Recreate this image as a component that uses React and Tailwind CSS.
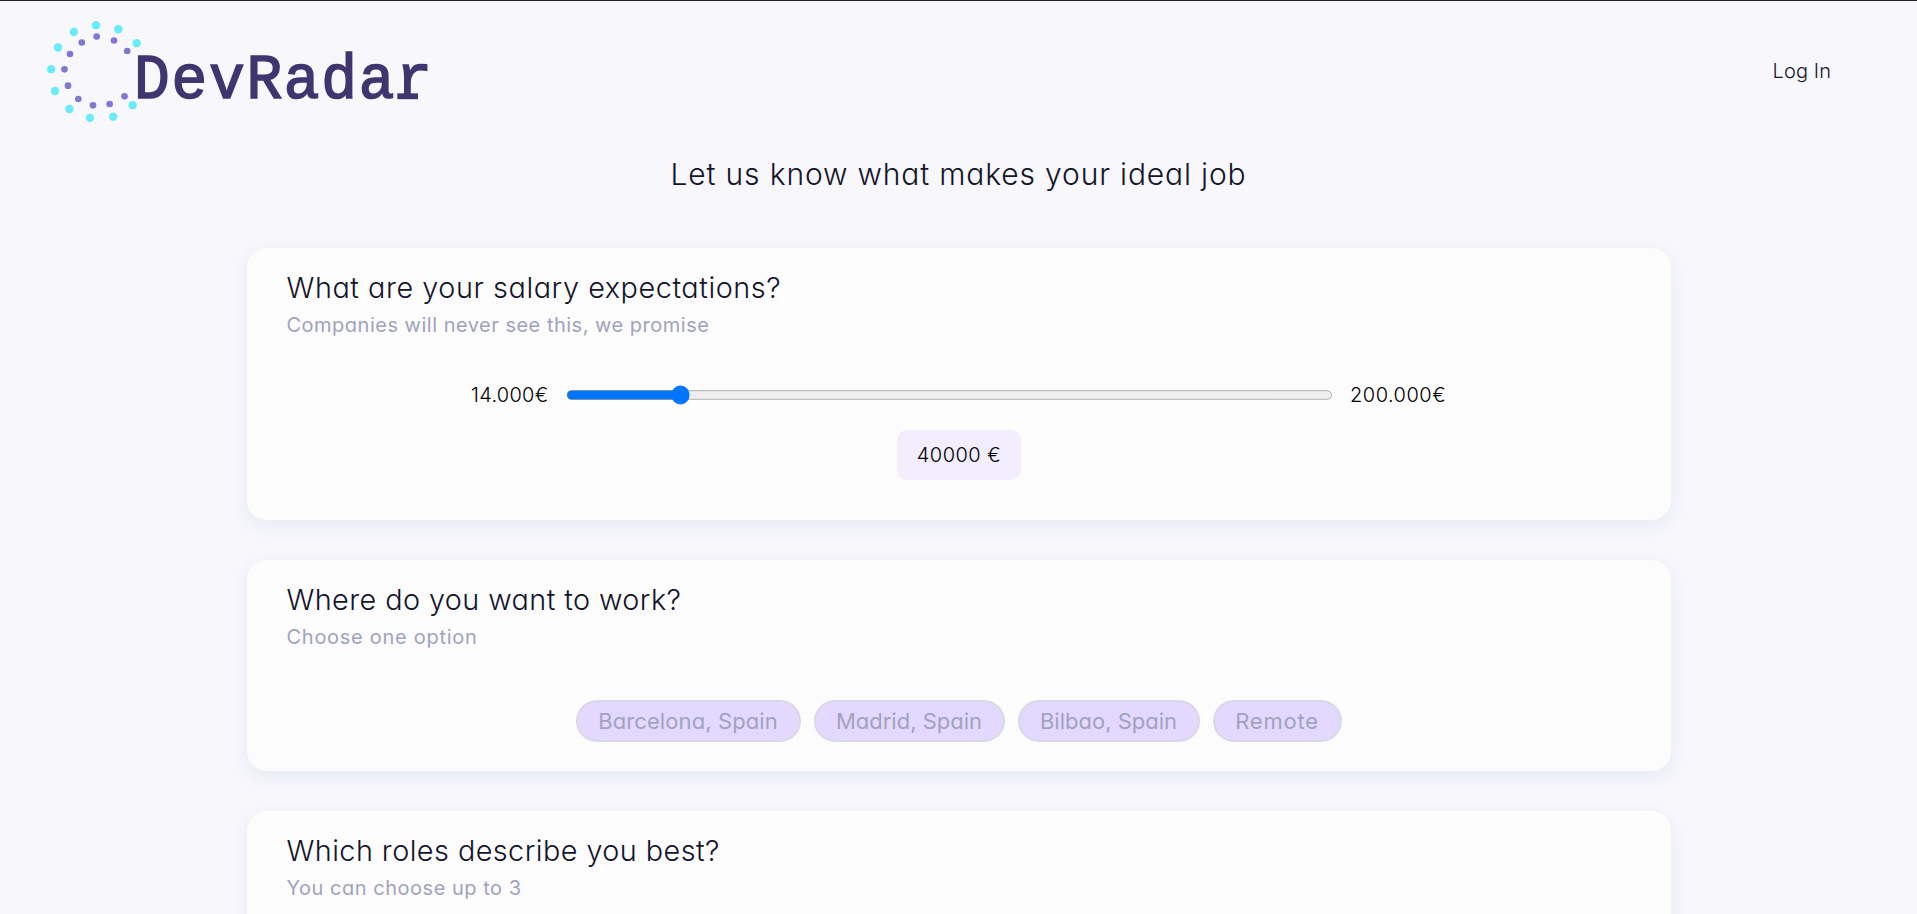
import { useState } from "react";

const outerDots = [[198,75.5],[265,87.5],[320,129.5],[308,315.5],[249.5,350],[180,353.5],[118,327],[75,273],[63.5,207.5],[84,142.5],[131.5,96]];
const innerDots = [[200,109.5],[252,121.5],[291.5,153],[283.5,289],[239,312],[189,316],[145,297],[114,257],[103.5,208],[120,162],[155.5,127.5]];

function Logo() {
  return (
    <svg viewBox="0 0 1260 420" className="h-[140px] w-[420px]" role="img" aria-label="DevRadar">
      {outerDots.map(([x, y]) => <circle key={x} cx={x} cy={y} r="12.6" fill="#6aebf8" />)}
      {innerDots.map(([x, y]) => <circle key={x} cx={x} cy={y} r="10" fill="#7f78d2" />)}
      <g fill="#40356f">
        <text transform="translate(312 295) scale(0.94 1)" textLength="951" lengthAdjust="spacing" fontSize="190" stroke="#40356f" strokeWidth="5" fontFamily="'Liberation Mono', monospace">DevRadar</text>
        {/* foot of the final r */}
        <rect x="1102" y="280" width="62" height="17.5" />
      </g>
    </svg>
  );
}

function Card({ title, titleClass, subtitle, subtitleClass, children, className }) {
  return (
    <section className={`flex flex-col rounded-[20px] bg-[#fcfcfc] px-10 pt-5 shadow-[0_6px_18px_rgba(170,190,220,0.22)] ${className}`}>
      <h2 className={`text-[28.8px] leading-10 font-[330] whitespace-nowrap text-[#14142b] ${titleClass}`}>{title}</h2>
      <p className={`pt-px text-xl leading-8 font-[380] whitespace-nowrap text-[#a0a3bd] ${subtitleClass}`}>{subtitle}</p>
      {children}
    </section>
  );
}

const places = [
  { name: "Barcelona, Spain", size: "w-[225px] tracking-[0.1px]" },
  { name: "Madrid, Spain", size: "w-[191px]" },
  { name: "Bilbao, Spain", size: "w-[182px]" },
  { name: "Remote", size: "w-[129px] tracking-[0.8px]" },
];

export default function App() {
  const [salary, setSalary] = useState(40000);
  return (
    <div className="h-screen overflow-hidden border-t border-[#222222] bg-[#f7f7fc] font-['Inter',sans-serif] text-[#14142b] [font-feature-settings:'cv11']">
      <header className="-mt-px flex h-[140px] items-center justify-between pr-[86px] pl-[30px]">
        <Logo />
        <a href="#" className="mt-0.5 text-xl leading-6 font-[350] tracking-[0.1px]">Log In</a>
      </header>
      <main className="mx-auto flex w-[1424px] flex-col">
        <h1 className="mt-[10px] text-center text-[30px] leading-[48px] font-[330] tracking-[0.84px]">Let us know what makes your ideal job</h1>
        <div className="mt-[50px] flex flex-col gap-10">
          <Card title="What are your salary expectations?" titleClass="tracking-[0.56px]" subtitle="Companies will never see this, we promise" subtitleClass="tracking-[0.5px]" className="h-[272px]">
            <div className="mt-[34px] flex h-10 items-center justify-center gap-[17px] pl-px text-xl font-[350] text-black">
              <span className="w-[78px] tracking-[0.3px]">14.000€</span>
              <input type="range" min="14000" max="200000" step="1000" value={salary} onChange={(e) => setSalary(e.target.value)} className="m-0 w-[639.17px] [zoom:1.2]" />
              <span className="w-[97px] tracking-[0.5px]">200.000€</span>
            </div>
            <div className="mt-[15px] flex h-[50px] w-[124px] items-center justify-center self-center rounded-[10px] bg-[#f3eefe] pl-px text-xl font-[350] tracking-[0.5px] text-black">{salary} €</div>
          </Card>
          <Card title="Where do you want to work?" titleClass="tracking-[0.42px]" subtitle="Choose one option" subtitleClass="tracking-[0.72px]" className="h-[211px]">
            <div className="mt-[47px] flex justify-center gap-[13px]">
              {places.map((p) => (
                <button key={p.name} className={`flex h-[42px] items-center justify-center rounded-full border-2 border-[#d8d9e4] bg-[#e3d9fe] text-[22px] font-[380] whitespace-nowrap text-[#a0a3bd] ${p.size}`}>{p.name}</button>
              ))}
            </div>
          </Card>
          <Card title="Which roles describe you best?" titleClass="tracking-[0.45px]" subtitle="You can choose up to 3" subtitleClass="tracking-[0.52px]" className="h-[240px]" />
        </div>
      </main>
    </div>
  );
}
